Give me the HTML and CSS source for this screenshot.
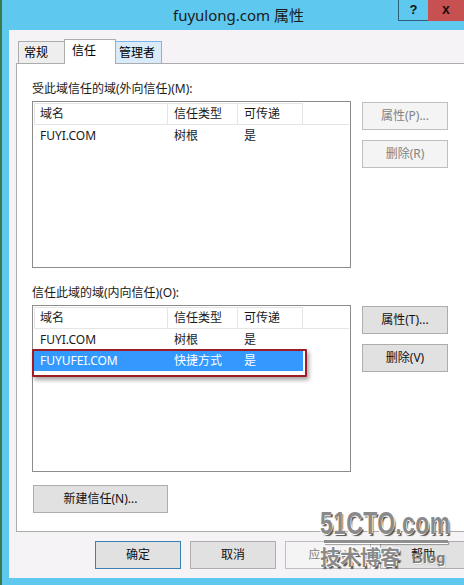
FILE: index.html
```html
<!DOCTYPE html>
<html lang="zh-CN">
<head>
<meta charset="utf-8">
<title>fuyulong.com 属性</title>
<link rel="stylesheet" href="styles.css">
</head>
<body>
<div class="titlebar">
  <div class="title">fuyulong.com 属性</div>
  <div class="controls">
    <div class="ctl help">?</div>
    <div class="ctl close">x</div>
  </div>
</div>
<div class="client">
  <div class="tabs">
    <div class="tab tab-general">常规</div>
    <div class="tab tab-active">信任</div>
    <div class="tab tab-hover">管理者</div>
  </div>
  <div class="panel">
    <div class="label">受此域信任的域(外向信任)(M):</div>
    <div class="group">
      <div class="list">
        <div class="thead">
          <div class="th c1">域名</div>
          <div class="th c2">信任类型</div>
          <div class="th c3">可传递</div>
        </div>
        <div class="tr">
          <div class="td c1">FUYI.COM</div>
          <div class="td c2">树根</div>
          <div class="td c3">是</div>
        </div>
      </div>
      <div class="btncol">
        <div class="btn side disabled">属性(P)...</div>
        <div class="btn side disabled">删除(R)</div>
      </div>
    </div>
    <div class="label label2">信任此域的域(内向信任)(O):</div>
    <div class="group">
      <div class="list">
        <div class="thead">
          <div class="th c1">域名</div>
          <div class="th c2">信任类型</div>
          <div class="th c3">可传递</div>
        </div>
        <div class="tr">
          <div class="td c1">FUYI.COM</div>
          <div class="td c2">树根</div>
          <div class="td c3">是</div>
        </div>
        <div class="tr selected">
          <div class="td c1">FUYUFEI.COM</div>
          <div class="td c2">快捷方式</div>
          <div class="td c3">是</div>
        </div>
        <div class="mark"></div>
      </div>
      <div class="btncol">
        <div class="btn side">属性(T)...</div>
        <div class="btn side">删除(V)</div>
      </div>
    </div>
    <div class="btn newtrust">新建信任(N)...</div>
  </div>
  <div class="footer">
    <div class="btn foot default">确定</div>
    <div class="btn foot">取消</div>
    <div class="btn foot disabled">应用(A)</div>
    <div class="btn foot">帮助</div>
  </div>
</div>
<div class="watermark">
  <div class="wm-logo">51CTO.com</div>
  <div class="wm-bar"></div>
  <div class="wm-sub"><span class="wm-cn">技术博客</span><span class="wm-blog">Blog</span></div>
</div>
</body>
</html>
```
FILE: styles.css
```css
html, body {
  margin: 0;
  padding: 0;
}
body {
  width: 464px;
  height: 585px;
  overflow: hidden;
  background: #5fc8ee;
  border-left: 2px solid #3b7a4c;
  box-sizing: border-box;
  font-family: "Noto Sans", "Noto Sans CJK SC", sans-serif;
  font-size: 12px;
  color: #000;
  position: relative;
}
.titlebar {
  height: 30px;
  display: flex;
}
.title {
  margin-left: 171px;
  line-height: 30px;
  font-size: 15px;
  color: #1b1b1b;
  font-family: "Noto Sans", "Noto Sans CJK SC", sans-serif;
}
.controls {
  margin-left: auto;
  display: flex;
  height: 21px;
}
.ctl {
  height: 21px;
  box-sizing: border-box;
  text-align: center;
  font-weight: bold;
  font-family: "Liberation Sans", sans-serif;
  font-size: 13px;
  line-height: 19px;
  color: #111;
}
.help {
  width: 30px;
  border-left: 1px solid #2d5f7a;
  border-bottom: 1px solid #2d5f7a;
}
.close {
  width: 36px;
  background: #c75050;
  font-size: 14px;
  line-height: 18px;
}
.client {
  margin-left: 7px;
  height: 548px;
  background: #f5f3f6;
  overflow: hidden;
  padding-top: 9px;
  box-sizing: border-box;
}
.tabs {
  display: flex;
  align-items: flex-end;
  margin-left: 9px;
  height: 24px;
}
.tab {
  height: 22px;
  box-sizing: border-box;
  border: 1px solid #acacac;
  border-bottom: none;
  line-height: 21px;
  background: #efeeef;
}
.tab-general {
  width: 46px;
  padding-left: 5px;
  border-right: none;
}
.tab-active {
  width: 52px;
  height: 25px;
  padding-left: 7px;
  background: #fff;
  margin-bottom: -1px;
  position: relative;
  z-index: 1;
  line-height: 21px;
}
.tab-hover {
  width: 46px;
  padding-left: 3px;
  background: #d9ebf9;
  border-color: #7eb4ea;
  border-left: none;
}
.panel {
  margin-left: 7px;
  width: 470px;
  height: 469px;
  box-sizing: border-box;
  border: 1px solid #acacac;
  background: #fff;
  padding: 17px 0 0 15px;
}
.label {
  height: 16px;
  line-height: 16px;
  margin-bottom: 4px;
  color: #1a1a1a;
}
.label2 {
  margin-top: 17px;
}
.group {
  display: flex;
}
.list {
  width: 319px;
  height: 167px;
  box-sizing: border-box;
  border: 1px solid #8c8c8c;
  padding-top: 1px;
  position: relative;
}
.thead {
  display: flex;
  margin: 0 1px;
  border-bottom: 1px solid #e5e5e5;
}
.th {
  height: 21px;
  box-sizing: border-box;
  border-top: 1px solid #e5e5e5;
  border-right: 1px solid #e5e5e5;
  padding-left: 6px;
  line-height: 19px;
  color: #1a1a1a;
}
.th.c1 {
  border-left: 1px solid #e5e5e5;
  padding-left: 5px;
}
.c1 { width: 134px; }
.c2 { width: 70px; }
.c3 { width: 65px; }
.tr {
  display: flex;
  margin-left: 1px;
  height: 21px;
  line-height: 21px;
  color: #1a1a1a;
}
.td {
  box-sizing: border-box;
  padding-left: 6px;
}
.tr.selected {
  width: 269px;
  background: #3399ff;
  color: #fff;
}
.mark {
  position: absolute;
  left: -1px;
  top: 43px;
  width: 275px;
  height: 28px;
  box-sizing: border-box;
  border: 2px solid #9e1c23;
  border-radius: 1px;
  box-shadow: 2px 3px 4px rgba(0, 0, 0, 0.35);
}
.btncol {
  margin-left: 11px;
  padding-top: 1px;
  display: flex;
  flex-direction: column;
  gap: 10px;
}
.btn {
  box-sizing: border-box;
  border: 1px solid #adadad;
  background: #e1e1e1;
  text-align: center;
  color: #111;
}
.side {
  width: 86px;
  height: 28px;
  line-height: 26px;
}
.btn.disabled {
  background: #f4f4f4;
  border-color: #bfbfbf;
  color: #838383;
}
.newtrust {
  margin-top: 13px;
  margin-left: 1px;
  width: 135px;
  height: 28px;
  line-height: 26px;
}
.footer {
  display: flex;
  gap: 9px;
  margin-top: 9px;
  margin-left: 86px;
}
.foot {
  width: 86px;
  height: 28px;
  line-height: 26px;
  flex: none;
}
.foot.default {
  border-color: #3c7fb1;
}
.watermark {
  position: absolute;
  left: 318px;
  top: 509px;
  width: 130px;
  pointer-events: none;
}
.wm-logo {
  font-family: "Liberation Sans", sans-serif;
  font-weight: bold;
  font-size: 31px;
  line-height: 30px;
  color: #8a8a8a;
  transform: scaleX(0.74);
  transform-origin: left top;
  white-space: nowrap;
  letter-spacing: 0.5px;
  text-shadow: -1px -1px 0 #fff, 1px -1px 0 #fff, -1px 1px 0 #fff, 2px 2px 1px #555;
}
.wm-bar {
  margin-top: 1px;
  margin-left: 4px;
  width: 124px;
  height: 3px;
  background: #8f8f8f;
  box-shadow: 0 1px 0 #fff, 1px 2px 1px rgba(0, 0, 0, 0.35);
}
.wm-sub {
  margin-top: 3px;
  display: flex;
  align-items: center;
  white-space: nowrap;
}
.wm-cn {
  font-family: "Noto Sans CJK SC", sans-serif;
  font-weight: bold;
  font-size: 20px;
  line-height: 22px;
  color: #8a8a8a;
  text-shadow: -1px -1px 0 #fff, 1px -1px 0 #fff, -1px 1px 0 #fff, 2px 2px 1px #555;
}
.wm-blog {
  margin-left: 12px;
  font-family: "Liberation Sans", sans-serif;
  font-weight: bold;
  font-size: 15px;
  color: #7e7e7e;
  text-shadow: 1px 1px 0 #fff, 1px 1px 1px #555;
}
```
